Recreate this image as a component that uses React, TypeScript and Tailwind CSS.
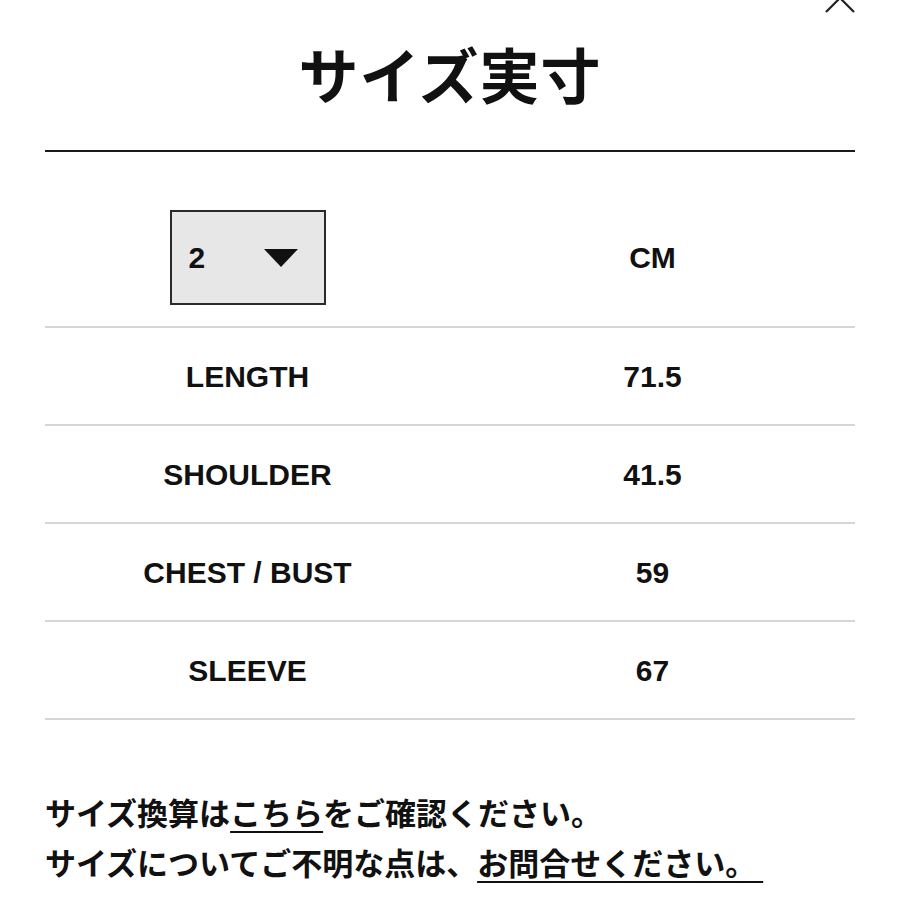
const rows = [
  { label: "LENGTH", value: "71.5" },
  { label: "SHOULDER", value: "41.5" },
  { label: "CHEST / BUST", value: "59" },
  { label: "SLEEVE", value: "67" },
]

const latin = "font-['Liberation_Sans','Noto_Sans_CJK_JP',sans-serif]"
const jp = "font-['Noto_Sans_CJK_JP',sans-serif]"

export default function App() {
  return <div className="relative w-[900px] h-[900px] overflow-hidden bg-white text-[#111]">
    <svg className="absolute left-[822px] top-[-20px]" width="36" height="36" viewBox="0 0 36 36">
      <path d="M4 4 L32 32 M32 4 L4 32" stroke="#222" strokeWidth="2.2" fill="none"/>
    </svg>

    <div className="px-[45px]">
      <div className="flex justify-center items-center h-[150px] pb-[4px]">
        <h1 className={`${jp} text-[60px] font-bold leading-none tracking-[1px]`}>サイズ実寸</h1>
      </div>
      <div className="h-[2px] bg-[#1a1a1a]"/>

      <div className="grid grid-cols-2 items-center pt-[58px] pb-[21px] border-b-2 border-[#d6d6d6]">
        <div className="flex justify-center">
          <div className="w-[156px] h-[95px] bg-[#e7e7e7] border-2 border-[#2a2a2a] flex items-center justify-between pl-[17px] pr-[26px]">
            <span className={`${latin} text-[30px] font-bold`}>2</span>
            <svg width="34" height="18" viewBox="0 0 34 18">
              <path d="M0 0 H34 L17 18 Z" fill="#111"/>
            </svg>
          </div>
        </div>
        <div className={`${latin} text-center text-[30px] font-bold`}>CM</div>
      </div>

      {rows.map((row, i) => (
        <div key={i} className={`grid grid-cols-2 items-center h-[98px] border-b-2 border-[#d6d6d6] ${latin} text-[30px] font-bold`}>
          <div className="text-center">{row.label}</div>
          <div className="text-center">{row.value}</div>
        </div>
      ))}

      <div className={`${jp} text-[31px] font-bold leading-[50px] mt-[67px]`}>
        <p>サイズ換算は<span className="underline underline-offset-[6px] decoration-2">こちら</span>をご確認ください。</p>
        <p>サイズについてご不明な点は、<span className="underline underline-offset-[6px] decoration-2">お問合せください。&nbsp;</span></p>
      </div>
    </div>
  </div>
}
